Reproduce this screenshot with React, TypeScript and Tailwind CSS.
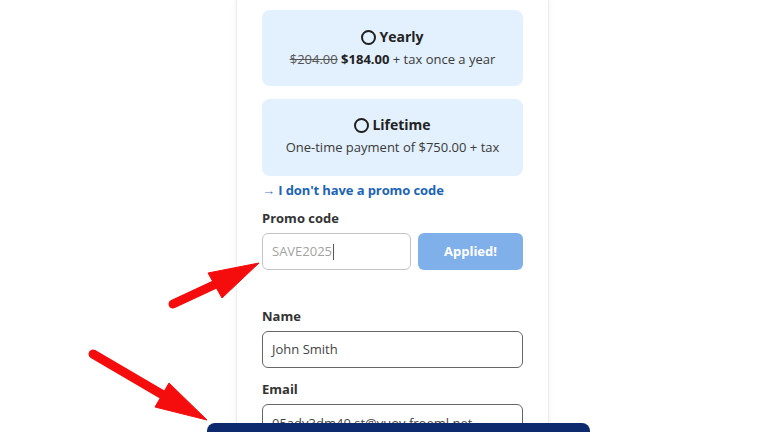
import React from 'react';

const font = { fontFamily: '"Open Sans", "Noto Sans", sans-serif' };

function Radio() {
  return <span className="inline-block h-[15px] w-[15px] rounded-full border-2 border-[#1f1f1f] bg-transparent" />;
}

function PlanOption({ title, children, className }: { title: string; children: React.ReactNode; className?: string }) {
  return (
    <div className={`flex flex-col items-center rounded-lg bg-[#e3f0fd] ${className ?? ''}`}>
      <div className="flex items-center gap-[3px] text-[14px] font-bold leading-5 text-[#222]">
        <Radio />
        <span>{title}</span>
      </div>
      <div className="mt-[2px] text-[13px] leading-5 text-[#3a3a3a]">{children}</div>
    </div>
  );
}

function Arrows() {
  return (
    <svg className="pointer-events-none absolute inset-0" width="768" height="432" viewBox="0 0 768 432">
      <g fill="#f50c0c" stroke="#f50c0c">
        <line x1="173" y1="304" x2="216" y2="284" strokeWidth="9" strokeLinecap="round" />
        <polygon points="259,263 208,273 222,298" strokeWidth="1" strokeLinejoin="round" />
        <line x1="93" y1="354" x2="163" y2="395" strokeWidth="9" strokeLinecap="round" />
        <polygon points="207,420 169,383 155,407" strokeWidth="1" strokeLinejoin="round" />
      </g>
    </svg>
  );
}

export default function App() {
  return (
    <div className="relative h-[432px] w-[768px] overflow-hidden bg-white" style={font}>
      <div className="ml-[236px] h-full w-[313px] border-x border-[#ececec] bg-white px-[25px] pt-[10px] shadow-[0_0_6px_rgba(0,0,0,0.06)]">
        <PlanOption title="Yearly" className="h-[76px] pt-[17px]">
          <span className="text-[#555] line-through">$204.00</span> <span className="font-bold text-[#222]">$184.00</span> + tax once a year
        </PlanOption>
        <PlanOption title="Lifetime" className="mt-[13px] h-[77px] pt-[16px]">
          One-time payment of $750.00 + tax
        </PlanOption>

        <div className="mt-[4px] text-[13px] font-bold leading-5 tracking-[-0.1px] text-[#1b64b8]">
          <span className="font-normal text-[#4a7fc0]">→</span> I don't have a promo code
        </div>

        <div className="mt-[8px] text-[13px] font-bold leading-5 text-[#333]">Promo code</div>
        <div className="mt-[5px] flex gap-[7px]">
          <div className="flex h-[37px] w-[149px] items-center rounded-md border border-[#c4c4c4] px-[9px] text-[13px] text-[#a3a3a3]">
            SAVE2025<span className="ml-[1px] inline-block h-[16px] w-px bg-[#555]" />
          </div>
          <div className="flex h-[37px] flex-1 items-center justify-center rounded-md bg-[#7fb0ea] text-[13px] font-bold text-white">
            Applied!
          </div>
        </div>

        <div className="mt-[36px] text-[13px] font-bold leading-5 text-[#333]">Name</div>
        <div className="mt-[5px] flex h-[37px] items-center rounded-md border border-[#666] px-[9px] text-[13px] text-[#444]">
          John Smith
        </div>

        <div className="mt-[11px] text-[13px] font-bold leading-5 text-[#333]">Email</div>
        <div className="mt-[5px] flex h-[37px] items-start rounded-md border border-[#666] px-[9px] pt-[9px] text-[13px] text-[#444]">
          05adv3dm40.st@vuov.froeml.net
        </div>
      </div>

      <div className="absolute left-[207px] top-[423px] h-[20px] w-[383px] rounded-t-lg bg-[#0d2a6e]" />
      <Arrows />
    </div>
  );
}
